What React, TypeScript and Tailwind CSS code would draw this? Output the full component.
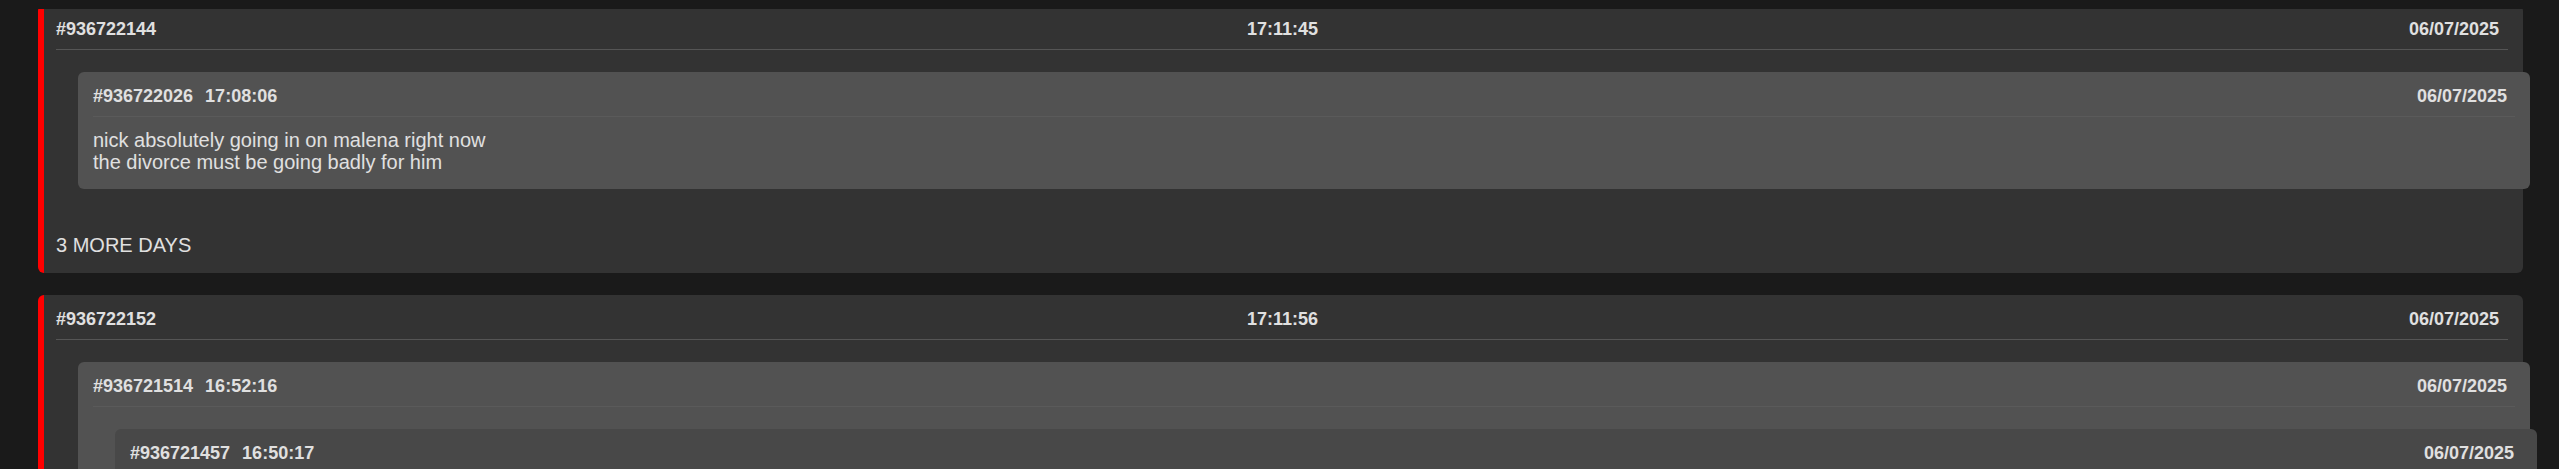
interface Post {
  id: string;
  time: string;
  date: string;
  lines: string[];
  quote?: Post;
}

const threads: Post[] = [
  {
    id: '#936722144',
    time: '17:11:45',
    date: '06/07/2025',
    lines: ['3 MORE DAYS'],
    quote: {
      id: '#936722026',
      time: '17:08:06',
      date: '06/07/2025',
      lines: ['nick absolutely going in on malena right now', 'the divorce must be going badly for him'],
    },
  },
  {
    id: '#936722152',
    time: '17:11:56',
    date: '06/07/2025',
    lines: ['called it'],
    quote: {
      id: '#936721514',
      time: '16:52:16',
      date: '06/07/2025',
      lines: ['told you so'],
      quote: {
        id: '#936721457',
        time: '16:50:17',
        date: '06/07/2025',
        lines: ['he is not making it past the weekend'],
      },
    },
  },
];

function Quote({ post, depth }: { post: Post; depth: number }) {
  return (
    <div
      className={`w-full ml-[22px] mt-[22px] rounded-md pt-[14px] pb-[16px] pl-[15px] pr-[15px] ${
        depth === 1 ? 'bg-[#525252]' : 'bg-[#484848]'
      }`}
    >
      <div className="flex items-center justify-between pb-[9px] pr-[8px] border-b border-[#5a5a5a] text-[18px] leading-[normal] font-bold">
        <div className="flex gap-[12px]">
          <span>{post.id}</span>
          <span>{post.time}</span>
        </div>
        <span>{post.date}</span>
      </div>
      {post.quote ? <Quote post={post.quote} depth={depth + 1} /> : null}
      <div className="mt-[12px] text-[20px] leading-[22px]">
        {post.lines.map((line) => (
          <div key={line}>{line}</div>
        ))}
      </div>
    </div>
  );
}

function ThreadCard({ post }: { post: Post }) {
  return (
    <div className="rounded-md bg-[#333333] border-l-[6px] border-[#ff0000] pt-[14px] pb-[16px] pl-[12px] pr-[15px]">
      <div className="flex items-center justify-between pb-[9px] pr-[9px] border-b border-[#555555] text-[18px] leading-[normal] font-bold">
        <span>{post.id}</span>
        <span>{post.time}</span>
        <span>{post.date}</span>
      </div>
      {post.quote && <Quote post={post.quote} depth={1} />}
      <div className="mt-[45px] text-[20px] leading-[23px]">
        {post.lines.map((line) => (
          <div key={line}>{line}</div>
        ))}
      </div>
    </div>
  );
}

export default function App() {
  return (
    <div className="h-screen overflow-hidden bg-[#1a1a1a] pt-[9px] font-['Liberation_Sans',Arial,sans-serif] text-[#e0e0e0]">
      <div className="h-full overflow-hidden">
        <div className="-mt-[4px] pl-[38px] pr-[36px] flex flex-col gap-[22px]">
          {threads.map((t) => (
            <ThreadCard key={t.id} post={t} />
          ))}
        </div>
      </div>
    </div>
  );
}
